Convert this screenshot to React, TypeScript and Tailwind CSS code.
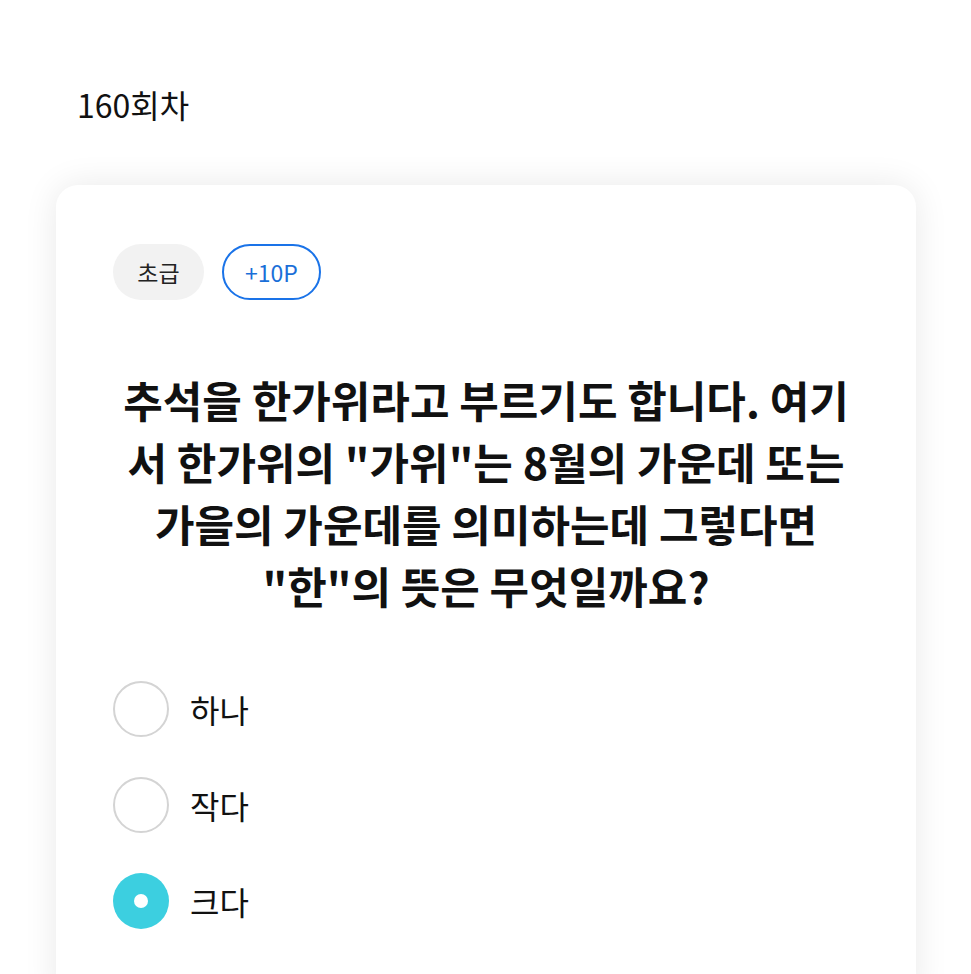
import React from "react";

const options = [
  { label: "하나", selected: false },
  { label: "작다", selected: false },
  { label: "크다", selected: true },
];

const Radio: React.FC<{ selected: boolean }> = ({ selected }) =>
  selected ? (
    <div className="flex h-[56px] w-[56px] shrink-0 items-center justify-center rounded-full bg-[#3ccfe0]">
      <div className="h-[14px] w-[14px] rounded-full bg-white" />
    </div>
  ) : (
    <div className="h-[56px] w-[56px] shrink-0 rounded-full border-2 border-[#d4d4d4] bg-white" />
  );

export default function App() {
  return (
    <div
      className="min-h-screen bg-white pl-[56px] pr-[55px] pt-[82px] text-[#111]"
      style={{ fontFamily: '"Noto Sans CJK KR", "Noto Sans", sans-serif' }}
    >
      <h1 className="pl-[21px] text-[32px] leading-[45px]">160회차</h1>

      <div className="mt-[58px] rounded-[22px] bg-white px-[57px] pb-[80px] pt-[59px] shadow-[0_0_34px_rgba(0,0,0,0.09)]">
        <div className="flex items-center gap-[18px]">
          <span className="flex h-[56px] w-[91px] items-center justify-center rounded-full bg-[#f2f2f2] text-[23px] text-[#222]">
            초급
          </span>
          <span className="flex h-[56px] w-[99px] items-center justify-center rounded-full border-2 border-[#1a73e8] text-[23px] text-[#1a6fd8]">
            +10P
          </span>
        </div>

        <p className="mt-[68px] break-all text-center text-[43px] font-bold leading-[62px]">
          추석을 한가위라고 부르기도 합니다. 여기서 한가위의 "가위"는 8월의 가운데 또는 가을의 가운데를 의미하는데 그렇다면 "한"의 뜻은 무엇일까요?
        </p>

        <div className="mt-[65px] flex flex-col gap-[40px]">
          {options.map((o) => (
            <div key={o.label} className="flex items-center gap-[21px]">
              <Radio selected={o.selected} />
              <span className="text-[32px] leading-none">{o.label}</span>
            </div>
          ))}
        </div>
      </div>
    </div>
  );
}
